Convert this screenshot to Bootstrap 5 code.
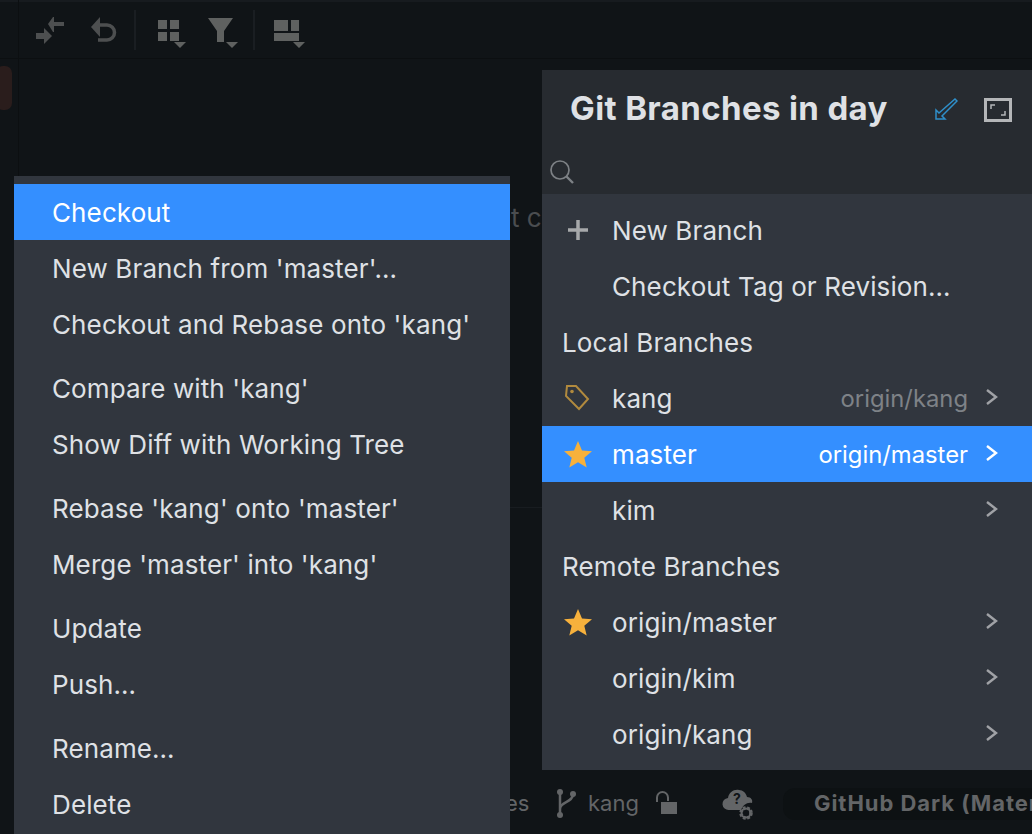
<!DOCTYPE html>
<html lang="en"><head><meta charset="utf-8"><title>Git Branches</title>
<link href="https://cdn.jsdelivr.net/npm/bootstrap@5.3.0/dist/css/bootstrap.min.css" rel="stylesheet">
<style>
html,body{height:100%}
body{background:#101417;font-family:Inter,"Liberation Sans",sans-serif;overflow:hidden;position:relative;width:1032px;height:834px}
.tool-top{height:59px;border-top:2px solid #171b1f;border-bottom:1px solid #0c0f11}
.tool-stripe{width:19px;border-right:1px solid #0c0f11;height:834px;position:absolute;left:0;top:0}
.tool-ic{position:absolute;fill:#5f6160}
.pill{position:absolute;left:-4px;top:66px;width:16px;height:44px;background:#2a1d1c;border-radius:7px}
.tsep{position:absolute;top:10px;height:40px;width:2px;background:#1a1e22}
.ghost{position:absolute;color:#4a4d50;font-size:26px;line-height:30px}
.hline{position:absolute;left:510px;width:32px;top:507px;height:1px;background:#181c20}
.git-menu{position:absolute;left:14px;top:176px;width:496px;height:658px;background:#31363e;padding-top:8px;color:#dfe1e5;font-size:26px;letter-spacing:.12px}
.git-pop{position:absolute;left:542px;top:70px;width:490px;height:700px;background:#31363e;color:#dfe1e5;font-size:26px;letter-spacing:.12px}
.mrow{height:56px;line-height:58px;padding-left:38px;white-space:nowrap}
.mgap{height:8px}
.hot{background:#348fff;color:#fff}
.pop-head{height:124px;background:#272b30;position:relative}
.pop-title{position:absolute;left:28px;top:18px;font-size:33px;line-height:40px;font-weight:700;color:#dfe1e5;letter-spacing:.38px}
.pop-list{padding-top:8px}
.brow{height:56px;line-height:58px;position:relative;padding-left:70px;white-space:nowrap;display:flex}
.brow.sect{padding-left:20px}
.btrack{margin-left:auto;margin-right:64px;color:#7e8287;font-size:23.8px;letter-spacing:0}
.hot .btrack{color:#fff}
.bic{position:absolute;left:20px;top:14px;width:32px;height:28px}
.chev{position:absolute;left:443px;top:18px;width:14px;height:18px;fill:none;stroke:#a0a2a6;stroke-width:2.4}
.hot .chev{stroke:#fff}
.status{position:absolute;top:770px;left:510px;right:0;height:64px;color:#636567;font-size:22px}
.theme-pill{position:absolute;left:273px;top:18px;width:260px;height:32px;background:#0d1113;border-radius:12px 0 0 12px}
.theme-txt{position:absolute;left:304px;top:18px;font-weight:700;font-size:22px;line-height:30px;white-space:nowrap;letter-spacing:.95px}
.kang-txt{position:absolute;left:78px;top:18px;line-height:30px}
.es-txt{position:absolute;left:-5px;top:18px;line-height:30px}
</style></head><body>
<div class="tool-stripe"></div>
<div class="tool-top"></div>
<div class="pill"></div>
<svg class="tool-ic" style="left:35px;top:15px" width="30" height="32" viewBox="0 0 30 32"><path d="M13 9l5-7h1v5h10v4H19v6h-1zM17 21l-8-8v5H1v6h8v5z" fill="#4d4f50"/></svg>
<svg class="tool-ic" style="left:90px;top:15px" width="28" height="30" viewBox="0 0 28 30"><path d="M10 2 1 12l9 10v-7.500h0" fill="#4d4f50"/><path d="M7 10h10a7 7 0 0 1 0 15H8" fill="none" stroke="#4d4f50" stroke-width="3.500"/></svg>
<div class="tsep" style="left:134px"></div>
<svg class="tool-ic" style="left:156px;top:18px" width="32" height="30" viewBox="0 0 32 30"><rect x="2" y="2" width="9" height="9"/><rect x="14" y="2" width="9" height="9"/><rect x="2" y="14" width="9" height="9"/><rect x="14" y="14" width="9" height="9"/><path d="M18 24h12l-6 6z"/></svg>
<svg class="tool-ic" style="left:207px;top:18px" width="32" height="30" viewBox="0 0 32 30"><path d="M1 0h25L17 13v11h-7V13z"/><path d="M19 24h12l-6 6z"/></svg>
<div class="tsep" style="left:253px"></div>
<svg class="tool-ic" style="left:272px;top:18px" width="34" height="30" viewBox="0 0 34 30"><path d="M2 2h14v11H2zM19 2h8v11h-8zM2 15h25v8H2zM21 24h12l-6 6z"/></svg>
<div class="ghost" style="left:511px;top:203px">t c</div>
<div class="hline"></div>

<div class="status">
<div class="es-txt">es</div>
<svg style="position:absolute;left:46px;top:18px" width="22" height="30" viewBox="0 0 22 30"><g fill="#636567"><circle cx="4" cy="4" r="3"/><circle cx="4" cy="27" r="3"/><circle cx="17" cy="6" r="3"/></g><path d="M4 4v23M17 6c0 9-13 7-13 15" fill="none" stroke="#636567" stroke-width="2.500"/></svg>
<div class="kang-txt">kang</div>
<svg style="position:absolute;left:145px;top:21px" width="26" height="26" viewBox="0 0 26 26"><path d="M2 11V6.500a5.500 5.500 0 0 1 11 0V10" fill="none" stroke="#636567" stroke-width="2"/><rect x="6" y="11" width="16" height="12" fill="#636567"/></svg>
<svg style="position:absolute;left:212px;top:17px" width="34" height="36" viewBox="0 0 34 36"><path d="M7 23a6 6 0 0 1-1-12c1-6 6-9 11-8 4 0 7 3 8 7 4 0 6 3 5 6-5-1-9 2-11 7z" fill="#636567"/><text x="11" y="17" font-size="14" font-weight="700" fill="#101417" font-family="Inter,sans-serif">?</text><circle cx="24" cy="26" r="5" fill="none" stroke="#636567" stroke-width="3.500" stroke-dasharray="2.500 1.500"/><circle cx="24" cy="26" r="4.500" fill="none" stroke="#636567" stroke-width="2"/></svg>
<div class="theme-pill"></div>
<div class="theme-txt">GitHub Dark (Material)</div>
</div>

<div class="git-menu">
<div class="mrow hot">Checkout</div>
<div class="mrow">New Branch from 'master'…</div>
<div class="mrow">Checkout and Rebase onto 'kang'</div>
<div class="mgap"></div>
<div class="mrow">Compare with 'kang'</div>
<div class="mrow">Show Diff with Working Tree</div>
<div class="mgap"></div>
<div class="mrow">Rebase 'kang' onto 'master'</div>
<div class="mrow">Merge 'master' into 'kang'</div>
<div class="mgap"></div>
<div class="mrow">Update</div>
<div class="mrow">Push…</div>
<div class="mgap"></div>
<div class="mrow">Rename…</div>
<div class="mrow">Delete</div>
</div>

<div class="git-pop">
<div class="pop-head">
<div class="pop-title">Git Branches in day</div>
<svg style="position:absolute;left:392px;top:28px" width="24" height="24" viewBox="0 0 24 24"><path d="M21 1 23 3 8 18l3 3H2v-9l3 3z" fill="none" stroke="#2f8fc9" stroke-width="1.500"/></svg>
<svg style="position:absolute;left:442px;top:28px" width="28" height="24" viewBox="0 0 28 24"><rect x="1.500" y="1.500" width="25" height="21" fill="none" stroke="#b4b6b8" stroke-width="3"/><path d="M7 11V7h4M21 13v4h-4" fill="none" stroke="#b4b6b8" stroke-width="1.500"/></svg>
<svg style="position:absolute;left:7px;top:89px" width="26" height="26" viewBox="0 0 26 26"><circle cx="11" cy="11" r="9" fill="none" stroke="#7d8185" stroke-width="1.700"/><path d="M17.500 17.500 24 24" stroke="#7d8185" stroke-width="2.400"/></svg>
</div>
<div class="pop-list">
<div class="brow"><svg class="bic" viewBox="0 0 32 28"><path d="M16 4v20M6 14h20" stroke="#a7a9ab" stroke-width="3.500"/></svg>New Branch</div>
<div class="brow">Checkout Tag or Revision…</div>
<div class="brow sect">Local Branches</div>
<div class="brow"><svg class="bic" viewBox="0 0 32 28"><path d="M5 2h9l12 13-9 10L4 12z" fill="none" stroke="#b18a3e" stroke-width="2"/><circle cx="10" cy="7.500" r="1.800" fill="#b18a3e"/></svg>kang<span class="btrack">origin/kang</span><svg class="chev" viewBox="0 0 14 18"><path d="M2 2l9 7-9 7"/></svg></div>
<div class="brow hot"><svg class="bic" viewBox="0 0 32 28"><path d="M16 1l4 9.500 10 .8-7.700 6.500 2.400 9.700L16 22.200 7.300 27.500l2.400-9.700L2 11.300l10-.8z" fill="#f7b13c"/></svg>master<span class="btrack">origin/master</span><svg class="chev" viewBox="0 0 14 18"><path d="M2 2l9 7-9 7"/></svg></div>
<div class="brow">kim<svg class="chev" viewBox="0 0 14 18"><path d="M2 2l9 7-9 7"/></svg></div>
<div class="brow sect">Remote Branches</div>
<div class="brow"><svg class="bic" viewBox="0 0 32 28"><path d="M16 1l4 9.500 10 .8-7.700 6.500 2.400 9.700L16 22.200 7.300 27.500l2.400-9.700L2 11.300l10-.8z" fill="#f7b13c"/></svg>origin/master<svg class="chev" viewBox="0 0 14 18"><path d="M2 2l9 7-9 7"/></svg></div>
<div class="brow">origin/kim<svg class="chev" viewBox="0 0 14 18"><path d="M2 2l9 7-9 7"/></svg></div>
<div class="brow">origin/kang<svg class="chev" viewBox="0 0 14 18"><path d="M2 2l9 7-9 7"/></svg></div>
</div>
</div>
<script src="https://cdn.jsdelivr.net/npm/bootstrap@5.3.0/dist/js/bootstrap.bundle.min.js"></script>
</body></html>
